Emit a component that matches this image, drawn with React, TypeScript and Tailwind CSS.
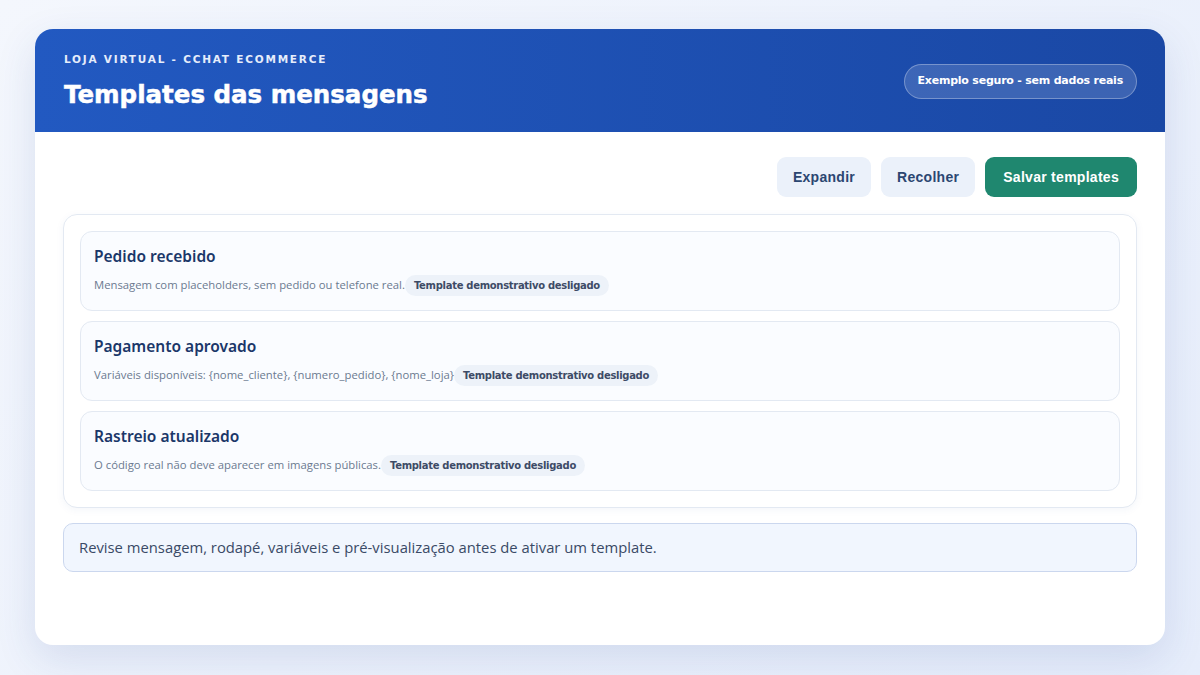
const templates = [
  {
    title: "Pedido recebido",
    desc: "Mensagem com placeholders, sem pedido ou telefone real.",
  },
  {
    title: "Pagamento aprovado",
    desc: "Variáveis disponíveis: {nome_cliente}, {numero_pedido}, {nome_loja}",
  },
  {
    title: "Rastreio atualizado",
    desc: "O código real não deve aparecer em imagens públicas.",
  },
];

function TemplateRow({ title, desc }: { title: string; desc: string }) {
  return (
    <div className="h-[80px] rounded-[12px] border border-[#e3e9f2] bg-[#fafcff] px-[13px] pt-[13px]">
      <div className="font-['Noto_Sans',sans-serif] text-[15.5px] font-semibold leading-[22px] text-[#1b3769]">
        {title}
      </div>
      <div className="mt-[8px] flex items-center">
        <span className="font-['Open_Sans',sans-serif] text-[11.3px] text-[#6b7a90]">{desc}</span>
        <span className="rounded-full bg-[#edf2f9] px-[9px] py-[3px] font-['DejaVu_Sans',sans-serif] text-[10px] font-bold tracking-[-0.03em] text-[#3d4b66]">
          Template demonstrativo desligado
        </span>
      </div>
    </div>
  );
}

export default function App() {
  return (
    <div className="min-h-[675px] w-full bg-[linear-gradient(135deg,#f4f7fd,#e6edfb)] px-[35px] pt-[29px] pb-[30px]">
      <div className="h-[616px] overflow-hidden rounded-[18px] bg-white shadow-[0_14px_40px_rgba(40,70,150,0.13)]">
        {/* header band */}
        <div className="flex h-[103px] items-start justify-between bg-[linear-gradient(90deg,#2259c1,#1a48a5)] pl-[29px] pr-[28px]">
          <div className="pt-[22px]">
            <div className="font-['DejaVu_Sans',sans-serif] text-[10.5px] font-bold leading-[16px] tracking-[0.17em] text-[#e6edfb]">
              LOJA VIRTUAL - CCHAT ECOMMERCE
            </div>
            <div className="mt-[12px] font-['DejaVu_Sans',sans-serif] text-[24.5px] font-bold leading-[32px] text-white [-webkit-text-stroke:0.5px_white]">
              Templates das mensagens
            </div>
          </div>
          <div className="mt-[35px] rounded-full border border-white/30 bg-white/15 px-[13px] py-[8px] font-['DejaVu_Sans',sans-serif] text-[11px] font-bold tracking-[-0.02em] text-white">
            Exemplo seguro - sem dados reais
          </div>
        </div>

        <div className="px-[28px] pt-[25px]">
          <div className="flex justify-end gap-[10px]">
            <button className="h-[40px] rounded-[9px] bg-[#ebf1fa] px-[16px] font-['Liberation_Sans',sans-serif] text-[14px] font-bold tracking-[0.02em] text-[#2b4671]">
              Expandir
            </button>
            <button className="h-[40px] rounded-[9px] bg-[#ebf1fa] px-[16px] font-['Liberation_Sans',sans-serif] text-[14px] font-bold tracking-[0.02em] text-[#2b4671]">
              Recolher
            </button>
            <button className="h-[40px] rounded-[9px] bg-[#1f876f] px-[18px] font-['Liberation_Sans',sans-serif] text-[14px] font-bold tracking-[0.02em] text-white">
              Salvar templates
            </button>
          </div>

          <div className="mt-[17px] flex flex-col gap-[10px] rounded-[14px] border border-[#e3e9f2] bg-white p-[16px] shadow-[0_2px_8px_rgba(40,70,150,0.05)]">
            {templates.map((t) => (
              <TemplateRow key={t.title} title={t.title} desc={t.desc} />
            ))}
          </div>

          <div className="mt-[15px] flex h-[49px] items-center rounded-[10px] border border-[#cbd7ee] bg-[#f1f6fe] px-[15px] font-['Open_Sans',sans-serif] text-[14.8px] text-[#3a4a66]">
            Revise mensagem, rodapé, variáveis e pré-visualização antes de ativar um template.
          </div>
        </div>
      </div>
    </div>
  );
}
